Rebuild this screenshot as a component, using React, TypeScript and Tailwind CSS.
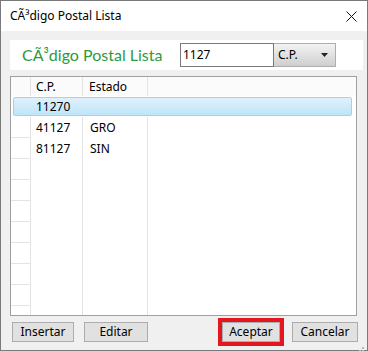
import React from 'react'

const rows = [
  { cp: '11270', estado: '' },
  { cp: '41127', estado: 'GRO' },
  { cp: '81127', estado: 'SIN' },
]

const font = { fontFamily: '"Segoe UI", "Noto Sans", "Liberation Sans", sans-serif' }

const Button: React.FC<{ label: string; className?: string }> = ({ label, className }) => (
  <div
    className={`h-[20px] flex items-center justify-center bg-[#e1e1e1] border border-[#adadad] text-[12px] text-black ${className || ''}`}
  >
    {label}
  </div>
)

const App: React.FC = () => {
  const emptyRows = 10 - rows.length

  return (
    <div className="w-[368px] h-[351px] flex flex-col border border-[#7a7a7a] bg-[#f0f0f0]" style={font}>
      {/* Title bar */}
      <div className="h-[30px] bg-white flex items-center justify-between pl-[9px] pr-[10px] shrink-0">
        <span className="text-[12px] text-black">CÃ³digo Postal Lista</span>
        <svg width="11" height="11" viewBox="0 0 11 11" className="mt-[1px]">
          <path d="M0.5 0.5 L10.5 10.5 M10.5 0.5 L0.5 10.5" stroke="#111" strokeWidth="1" />
        </svg>
      </div>

      <div className="flex-1 flex flex-col pl-[9px]">
        {/* Header panel */}
        <div className="mt-[9px] mr-[4px] h-[30px] bg-white flex items-center">
          <span
            className="ml-[12px] w-[158px] text-[16px] text-[#2f9a3b] leading-none pb-[1px]"
            style={{ fontFamily: 'Lato, "Noto Sans", sans-serif' }}
          >
            CÃ³digo Postal Lista
          </span>
          <div className="h-[24px] w-[94px] border border-[#7a7a7a] bg-white flex items-center pl-[2px] text-[12px] text-black">
            1127
          </div>
          <div className="h-[24px] w-[62px] border border-[#adadad] border-l-0 bg-gradient-to-b from-[#f3f3f3] to-[#cfcfcf] flex items-center justify-between pl-[4px] pr-[7px] text-[12px] text-black">
            <span>C.P.</span>
            <svg width="7" height="4" viewBox="0 0 7 4">
              <path d="M0 0 L7 0 L3.5 4 Z" fill="#222" />
            </svg>
          </div>
        </div>

        {/* Grid */}
        <div className="mt-[6px] mr-[10px] h-[240px] border border-[#a0a0a0] bg-white flex flex-col text-[12px] text-black overflow-hidden">
          <div className="h-[19px] flex shrink-0 bg-[#fbfbfb]">
            <div className="w-[20px] border-r border-[#e3e3e3]" />
            <div className="w-[52px] border-r border-[#e3e3e3] pl-[5px] flex items-center">C.P.</div>
            <div className="w-[65px] border-r border-[#e3e3e3] pl-[6px] flex items-center">Estado</div>
            <div className="flex-1" />
          </div>

          {rows.map((r, i) =>
            i === 0 ? (
              <div key={i} className="h-[21px] flex shrink-0 pl-[2px] pr-[4px] py-[1px]">
                <div className="flex-1 flex items-center rounded-[2px] border border-[#9fd4ef] bg-gradient-to-b from-[#dff1fc] to-[#bfe5f8]">
                  <div className="w-[17px]" />
                  <div className="w-[52px] pl-[5px]">{r.cp}</div>
                  <div className="w-[65px] pl-[6px]">{r.estado}</div>
                </div>
              </div>
            ) : (
              <div key={i} className="h-[21px] flex shrink-0">
                <div className="w-[20px] border-r border-b border-[#e3e3e3]" />
                <div className="w-[52px] border-r border-[#e3e3e3] pl-[5px] flex items-center">{r.cp}</div>
                <div className="w-[65px] border-r border-[#e3e3e3] pl-[7px] flex items-center">{r.estado}</div>
                <div className="flex-1" />
              </div>
            )
          )}

          {Array.from({ length: emptyRows }).map((_, i) => (
            <div key={'e' + i} className="h-[21px] flex shrink-0">
              <div className="w-[20px] border-r border-b border-[#e3e3e3]" />
              <div className="w-[52px] border-r border-[#e3e3e3]" />
              <div className="w-[65px] border-r border-[#e3e3e3]" />
              <div className="flex-1" />
            </div>
          ))}

          <div className="flex-1 flex">
            <div className="w-[20px] border-r border-[#e3e3e3]" />
            <div className="w-[52px] border-r border-[#e3e3e3]" />
            <div className="w-[65px] border-r border-[#e3e3e3]" />
            <div className="flex-1" />
          </div>
        </div>

        {/* Buttons */}
        <div className="mt-[2px] flex items-center pr-[9px]">
          <div className="pl-[2px] flex gap-[10px]">
            <Button label="Insertar" className="w-[62px]" />
            <Button label="Editar" className="w-[64px]" />
          </div>
          <div className="ml-auto flex items-center gap-[8px]">
            <div className="border-[4px] border-[#e3171f]">
              <Button label="Aceptar" className="w-[58px] h-[17px]" />
            </div>
            <Button label="Cancelar" className="w-[66px]" />
          </div>
        </div>

        <div className="flex-1 flex justify-end items-end pr-[2px] pb-[2px]">
          <svg width="10" height="10" viewBox="0 0 10 10">
            <g fill="#b8b8b8">
              <rect x="7" y="1" width="2" height="2" />
              <rect x="4" y="4" width="2" height="2" />
              <rect x="7" y="4" width="2" height="2" />
              <rect x="1" y="7" width="2" height="2" />
              <rect x="4" y="7" width="2" height="2" />
              <rect x="7" y="7" width="2" height="2" />
            </g>
          </svg>
        </div>
      </div>
    </div>
  )
}

export default App
